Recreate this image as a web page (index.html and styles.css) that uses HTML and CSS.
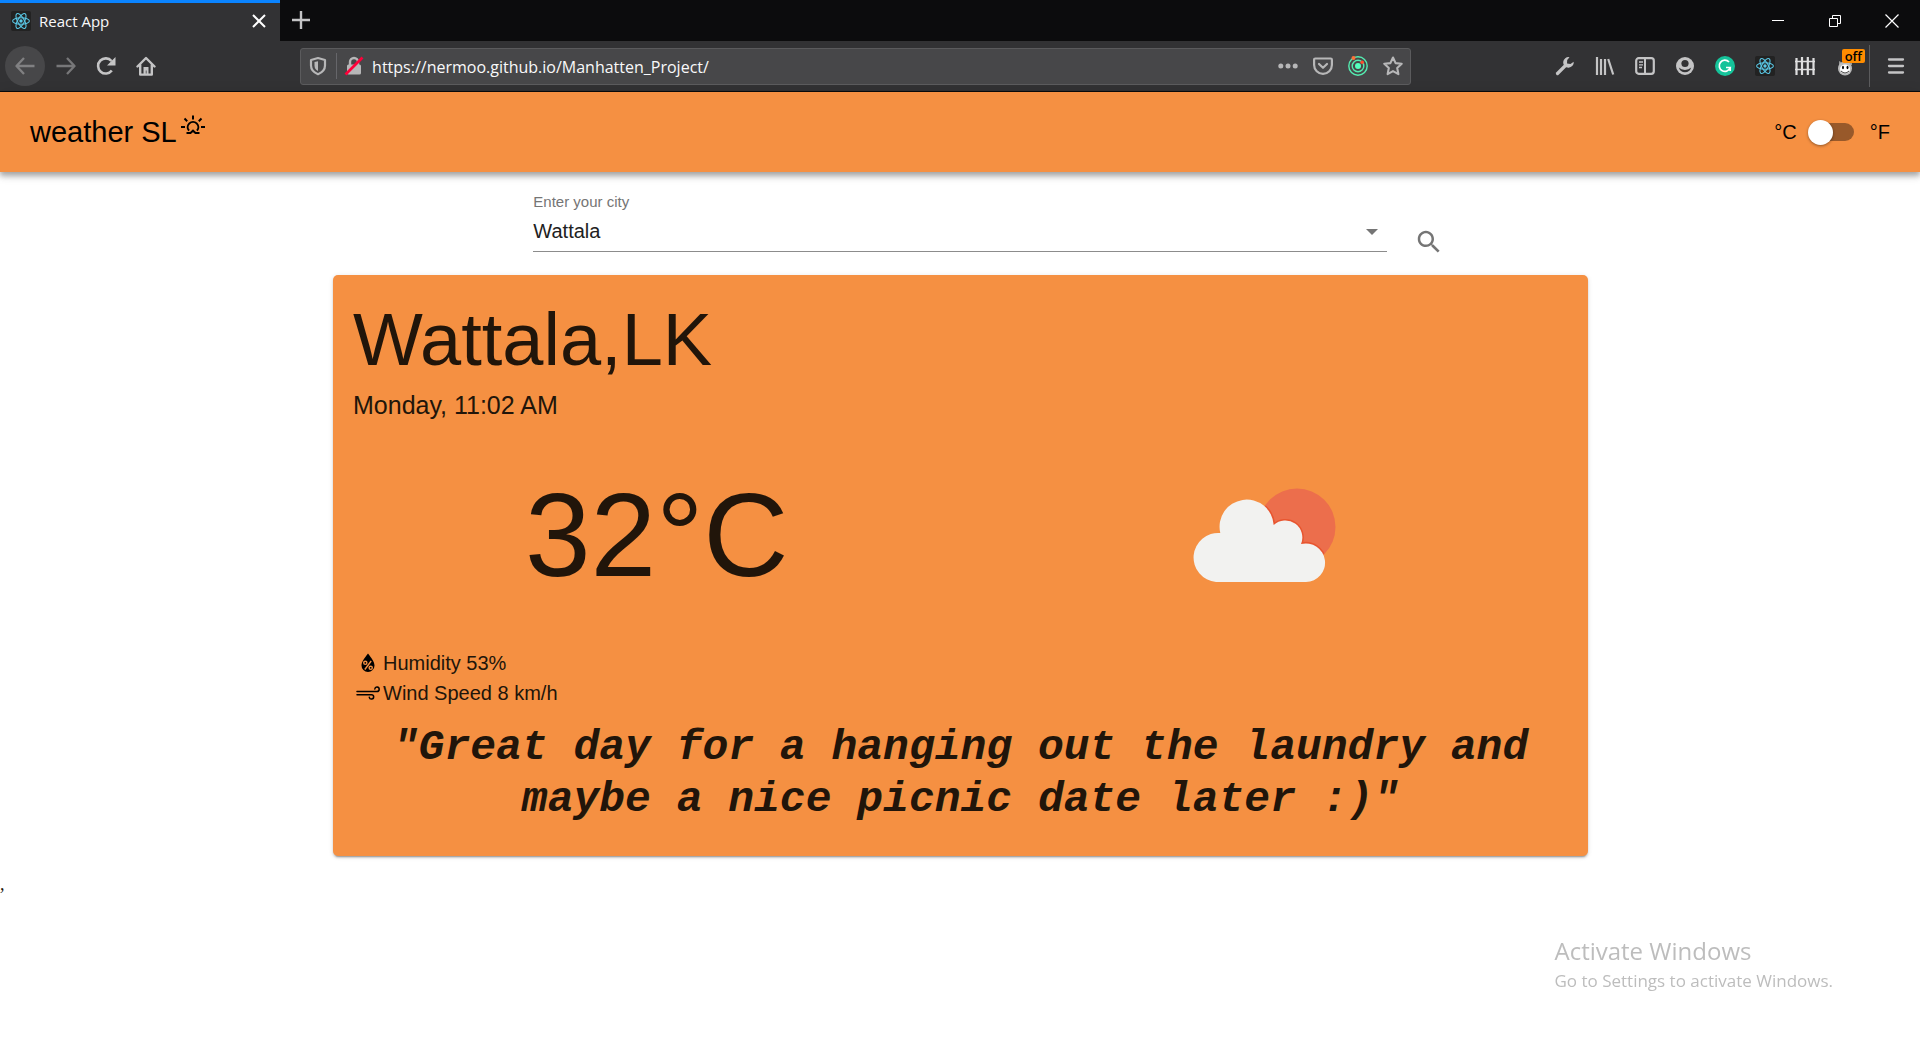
FILE: index.html
```
<!DOCTYPE html>
<html lang="en">
<head>
<meta charset="utf-8">
<title>React App</title>
<link rel="stylesheet" href="styles.css">
</head>
<body>
<svg class="sprite" aria-hidden="true">
  <symbol id="react-logo" viewBox="0 0 20 20">
    <rect width="20" height="20" rx="2" fill="#222"/>
    <g fill="none" stroke="#5ac8e6" stroke-width="1.1">
      <ellipse cx="10" cy="10" rx="8.4" ry="3.3"/>
      <ellipse cx="10" cy="10" rx="8.4" ry="3.3" transform="rotate(60 10 10)"/>
      <ellipse cx="10" cy="10" rx="8.4" ry="3.3" transform="rotate(120 10 10)"/>
    </g>
    <circle cx="10" cy="10" r="1.7" fill="#5ac8e6"/>
  </symbol>
</svg>

<div class="browser">
  <div class="tab-strip">
    <div class="tab">
      <svg class="icon"><use href="#react-logo"/></svg>
      <span class="tab-title">React App</span>
      <button class="tab-close" aria-label="Close tab"><svg class="icon" viewBox="0 0 20 20"><path d="M4 4l12 12M16 4L4 16" stroke="#fff" stroke-width="2" fill="none"/></svg></button>
    </div>
    <button class="tool" aria-label="New tab"><svg class="icon" viewBox="0 0 20 20"><path d="M11 1v18M2 10h18" stroke="#c4c4c5" stroke-width="2.4" fill="none"/></svg></button>
    <div class="window-controls">
      <button class="window-button" aria-label="Minimize"><svg class="icon" viewBox="0 0 20 20"><path d="M4 9.5h12" stroke="#fff"/></svg></button>
      <button class="window-button" aria-label="Restore"><svg class="icon" viewBox="0 0 20 20"><path d="M4.500 7.500h8v8h-8zM7.500 7V4.500h8v8H13" stroke="#fff" fill="none"/></svg></button>
      <button class="window-button" aria-label="Close"><svg class="icon" viewBox="0 0 20 20"><path d="M3.500 3.500l13 13M16.500 3.500l-13 13" stroke="#fff" stroke-width="1.200"/></svg></button>
    </div>
  </div>

  <div class="nav-bar">
    <button class="tool tool-back" aria-label="Back" disabled><svg class="icon" viewBox="0 0 20 20"><path d="M19.500 10H1.500M9 2L1.500 10L9 18" fill="none" stroke="#808082" stroke-width="2.300" stroke-linejoin="round"/></svg></button>
    <button class="tool" aria-label="Forward" disabled><svg class="icon" viewBox="0 0 20 20"><path d="M.5 10h18M11 2l7.500 8L11 18" fill="none" stroke="#777779" stroke-width="2.300" stroke-linejoin="round"/></svg></button>
    <button class="tool" aria-label="Reload"><svg class="icon" viewBox="0 0 20 20"><path d="M15.800 14.500A7.600 7.600 0 1 1 15.500 5" fill="none" stroke="#c4c4c5" stroke-width="2.600"/><path d="M19.500 1v8.500H11z" fill="#c4c4c5"/></svg></button>
    <button class="tool" aria-label="Home"><svg class="icon" viewBox="0 0 20 20"><path d="M1.500 10.500L10 2l8.500 8.500M4.200 9v9.600h11.600V9" fill="none" stroke="#c4c4c5" stroke-width="2.400" stroke-linejoin="round" stroke-linecap="round"/><path d="M7.500 18v-7h5v7h-2v-3.500H9.800V18z" fill="#c4c4c5"/></svg></button>
    <div class="nav-space"></div>
    <div class="url-bar">
      <svg class="icon" viewBox="0 0 20 20"><path d="M10 2L17 4v5.500c0 4-2.800 7-7 8.700c-4.200-1.700-7-4.700-7-8.700V4z" fill="none" stroke="#b7b7b8" stroke-width="2.200" stroke-linejoin="round"/><path d="M10 5.200v9.800c-2.400-1.300-3.500-3-3.500-5.500V6z" fill="#b7b7b8"/></svg>
      <span class="url-divider"></span>
      <svg class="icon" viewBox="0 0 20 20"><rect x="3" y="8.500" width="14" height="10" rx="1.500" fill="#b7b7b8"/><path d="M6 9V6a4 4 0 0 1 8 0v3" fill="none" stroke="#b7b7b8" stroke-width="2.400"/><path d="M1.500 18.500L18.500 1.500" stroke="#ff0039" stroke-width="2.600"/></svg>
      <input class="url-input" type="text" aria-label="Address" value="https://nermoo.github.io/Manhatten_Project/">
      <div class="url-actions">
        <svg class="icon" viewBox="0 0 20 20" fill="#b7b7b8"><circle cx="2.800" cy="10" r="2.500"/><circle cx="10" cy="10" r="2.500"/><circle cx="17.200" cy="10" r="2.500"/></svg>
        <svg class="icon" viewBox="0 0 20 20" fill="none" stroke="#b7b7b8" stroke-width="2.200" stroke-linejoin="round" stroke-linecap="round"><path d="M2.300 2.500h15.400q1.200 0 1.200 1.200v5.300a8.900 8.900 0 0 1-17.800 0V3.700q0-1.200 1.200-1.200z"/><path d="M6 8l4 3.800L14 8"/></svg>
        <svg class="icon" viewBox="0 0 20 20"><g fill="none" stroke="#54ecb0" stroke-width="1.400"><circle cx="10" cy="10" r="9.200"/><circle cx="10" cy="10" r="5.800"/></g><circle cx="10" cy="10" r="3" fill="#54ffbd"/><circle cx="5.500" cy="2" r="2" fill="#ff7139"/><circle cx="14.200" cy="6.200" r="1.800" fill="#ff4f2e"/></svg>
        <svg class="icon" viewBox="0 0 20 20"><path d="M10 1.500l2.600 5.600 6.100.7-4.500 4.200 1.200 6.100L10 15.100l-5.400 3 1.200-6.100L1.300 7.800l6.100-.7z" fill="none" stroke="#b7b7b8" stroke-width="2.100" stroke-linejoin="round"/></svg>
      </div>
    </div>
    <div class="nav-space"></div>
    <button class="tool" aria-label="Developer tools"><svg class="icon" viewBox="0 0 20 20"><path d="M2.500 17.500L11 9" stroke="#c4c4c5" stroke-width="3.200" stroke-linecap="round"/><path d="M14.500 1.200a5.300 5.300 0 1 0 4.200 4.500L15.500 8 12 7.500 12.200 4z" fill="#c4c4c5"/></svg></button>
    <button class="tool" aria-label="Library"><svg class="icon" viewBox="0 0 20 20"><path d="M2 1v18M6 3v16M10 3v16M13.200 3l5 15.500" stroke="#c4c4c5" stroke-width="2.200"/></svg></button>
    <button class="tool" aria-label="Sidebars"><svg class="icon" viewBox="0 0 20 20"><rect x="1.200" y="2.200" width="17.600" height="15.600" rx="2.500" fill="none" stroke="#c4c4c5" stroke-width="2.200"/><path d="M10 2v16" stroke="#c4c4c5" stroke-width="2"/><path d="M4 6h4M4 8.800h4M4 11.500h3" stroke="#c4c4c5" stroke-width="1.300"/></svg></button>
    <button class="tool" aria-label="Account"><svg class="icon" viewBox="0 0 20 20"><circle cx="10" cy="10" r="9" fill="#c4c4c5"/><circle cx="10" cy="7.500" r="3.600" fill="#323234"/><path d="M3.800 11.500q2.200 2.400 6.200 2.400t6.200-2.400q-1.500 4.700-6.200 4.700t-6.200-4.700z" fill="#323234"/></svg></button>
    <button class="tool" aria-label="Grammarly"><svg class="icon" viewBox="0 0 20 20"><circle cx="10" cy="10" r="10" fill="#15c39a"/><path d="M14 6a5.600 5.600 0 1 0 1.200 5.500H11M15.200 11v4" fill="none" stroke="#fff" stroke-width="1.700"/></svg></button>
    <button class="tool" aria-label="React Developer Tools"><svg class="icon"><use href="#react-logo"/></svg></button>
    <button class="tool" aria-label="Fence"><svg class="icon" viewBox="0 0 20 20"><path d="M1.500 2v17M7 1v18M12.800 1v18M18.500 2v17" stroke="#dededf" stroke-width="2.200"/><path d="M0 5.500h20M0 13.500h20" stroke="#dededf" stroke-width="1.400"/></svg></button>
    <button class="tool tool-badged" aria-label="Monkey extension"><svg class="icon" viewBox="0 0 20 20"><path d="M4 9V5l4 2h5l4-2v4z" fill="#999"/><circle cx="10" cy="12.500" r="7" fill="#bababa"/><ellipse cx="10" cy="13" rx="5" ry="4.500" fill="#fff"/><ellipse cx="8" cy="11.500" rx="1" ry="1.700"/><ellipse cx="12.500" cy="11.500" rx="1" ry="1.700"/><path d="M6 15q4 4 8 0" fill="none" stroke="#444"/></svg><span class="badge">off</span></button>
    <span class="nav-divider"></span>
    <button class="tool tool-menu" aria-label="Open menu"><svg class="icon" viewBox="0 0 20 20"><path d="M3 3.500h14M3 10h14M3 16.500h14" stroke="#c4c4c5" stroke-width="2.300" stroke-linecap="round"/></svg></button>
  </div>
</div>

<header class="app-bar">
  <h1 class="brand">weather SL<svg class="brand-icon" viewBox="0 0 30 30" fill="none" stroke="#000" stroke-width="2"><path d="M16 5.500v4M7.500 8.500l2.700 2.700M24.500 8.500l-2.700 2.700M4 17h4M24 17h4M9.500 23h4l2.500-2.300 2.500 2.300h4M12 20.700a5.300 5.300 0 1 1 8 0"/></svg></h1>
  <div class="units">
    <label for="unit">°C</label>
    <input class="unit-switch" id="unit" type="checkbox" role="switch" aria-label="Show Fahrenheit">
    <label for="unit">°F</label>
  </div>
</header>

<main class="content">
  <form class="search">
    <div class="field">
      <label class="field-label" for="city">Enter your city</label>
      <div class="select-wrap">
        <select class="city-select" id="city"><option>Wattala</option></select>
        <svg class="select-arrow" viewBox="0 0 30 30"><path d="M9 12l6 6 6-6z" fill="#757575"/></svg>
      </div>
    </div>
    <button class="search-button" type="button" aria-label="Search"><svg class="search-icon" viewBox="0 0 24 24"><path fill="#757575" d="M15.500 14h-.79l-.28-.27C15.410 12.590 16 11.110 16 9.500 16 5.910 13.090 3 9.500 3S3 5.910 3 9.500 5.910 16 9.500 16c1.610 0 3.090-.59 4.230-1.570l.27.280v.790l5 4.990L20.490 19l-4.990-5zm-6 0C7.010 14 5 11.990 5 9.500S7.010 5 9.500 5 14 7.010 14 9.500 11.990 14 9.500 14z"/></svg></button>
  </form>

  <section class="card">
    <h2 class="place">Wattala,LK</h2>
    <p class="time">Monday, 11:02 AM</p>
    <div class="current">
      <div class="temperature">32°C</div>
      <svg class="condition" viewBox="0 0 144 94" role="img" aria-label="Partly cloudy">
        <clipPath id="sun-clip"><circle cx="105" cy="39" r="38"/></clipPath>
        <circle cx="105" cy="39" r="38.500" fill="#ec6e4c"/>
        <g clip-path="url(#sun-clip)"><use href="#cloud" stroke="#e8552f" stroke-width="3"/></g>
        <path id="cloud" d="M24 94A24.500 24.500 0 1 1 28.300 45A27.100 27.100 0 1 1 81.700 37A17 17 0 0 1 109 56A19.300 19.300 0 1 1 114 94z" fill="#f2f2f0"/>
      </svg>
    </div>
    <ul class="details">
      <li class="detail"><svg class="detail-icon" viewBox="0 0 30 30"><path d="M15 5.500c3.800 5 6.500 8.500 6.500 12a6.500 6.500 0 0 1-13 0c0-3.500 2.700-7 6.500-12z"/><g fill="none" stroke="#f59042" stroke-width="1.400"><circle cx="12.300" cy="14.800" r="1.600"/><circle cx="17.700" cy="19.800" r="1.600"/><path d="M18.200 13l-6.400 8.500"/></g></svg>Humidity 53%</li>
      <li class="detail"><svg class="detail-icon" viewBox="0 0 30 30" fill="none" stroke="#000" stroke-width="1.500" stroke-linecap="round"><path d="M4 13.500h20a2.200 2.200 0 1 0-2.200-2.500M4 16.700h14.500a2.200 2.200 0 1 1-2.200 2.600"/></svg>Wind Speed 8 km/h</li>
    </ul>
    <p class="quote">"Great day for a hanging out the laundry and maybe a nice picnic date later :)"</p>
  </section>
</main>
<p class="stray">,</p>

<aside class="watermark">
  <p class="watermark-title">Activate Windows</p>
  <p class="watermark-text">Go to Settings to activate Windows.</p>
</aside>
</body>
</html>
```
FILE: styles.css
```
* { box-sizing: border-box; }

body {
  margin: 0;
  min-height: 100vh;
  background: #fff;
  color: #21150a;
  font-family: "Liberation Sans", Arial, sans-serif;
  font-size: 20px;
}

h1, h2, p, ul { margin: 0; padding: 0; font-weight: 400; }
button { border: 0; padding: 0; background: none; font: inherit; }
svg { display: block; flex: none; }

.sprite { position: absolute; width: 0; height: 0; }
.icon { width: 20px; height: 20px; }

/* Browser frame */
.browser {
  border-bottom: 1px solid #0c0c0d;
  background: #323234;
  font-family: "Open Sans", "Segoe UI", sans-serif;
}
.tab-strip { display: flex; height: 41px; background: #0c0c0d; }
.tab {
  display: flex;
  align-items: center;
  gap: 8px;
  width: 280px;
  padding: 0 11px 2px;
  border-top: 3px solid #0a84ff;
  background: #323234;
  color: #f9f9fa;
}
.tab-title { flex: 1; font-size: 15px; }
.window-controls { display: flex; margin-left: auto; }
.window-button { display: grid; place-items: center; width: 57px; }

.nav-bar { display: flex; align-items: center; height: 50px; padding: 0 4px 0 5px; }
.tool { position: relative; display: grid; flex: none; place-items: center; width: 40px; height: 40px; }
.tool-back { margin-right: 1px; border-radius: 50%; background: #474749; }
.nav-space { flex: 6; }
.url-bar {
  display: flex;
  flex: 49;
  align-items: center;
  height: 37px;
  padding: 0 7px;
  border: 1px solid #5b5b5d;
  border-radius: 3px;
  background: #474749;
}
.url-divider { width: 1px; height: 26px; margin: 0 7px 0 8px; background: #66666a; }
.url-input {
  flex: 1;
  min-width: 0;
  padding: 2px 8px 0;
  border: 0;
  background: none;
  color: #f9f9fa;
  font: 16px "Open Sans", "Segoe UI", sans-serif;
}
.url-actions { display: flex; gap: 15px; }
.badge {
  position: absolute;
  top: 3px;
  right: 0;
  padding: 0 3px;
  border-radius: 2px;
  background: #ff8c00;
  color: #000;
  font-size: 13px;
  font-weight: 600;
  line-height: 14px;
}
.nav-divider { width: 1px; height: 42px; margin: 0 6px 0 4px; background: #5b5b5d; }

/* App header */
.app-bar {
  display: flex;
  align-items: center;
  justify-content: space-between;
  height: 80px;
  padding: 0 30px;
  background: #f59042;
  box-shadow: 0 3px 5px rgba(0, 0, 0, .2), 0 5px 6px rgba(0, 0, 0, .14), 0 1px 13px rgba(0, 0, 0, .12);
  color: #000;
}
.brand { display: flex; font-size: 29px; line-height: 44px; }
.brand-icon { width: 30px; height: 30px; }
.units { display: flex; align-items: center; }
.unit-switch {
  position: relative;
  width: 42px;
  height: 18px;
  margin: 0 16px 0 15px;
  border-radius: 9px;
  background: #98592a;
  appearance: none;
}
.unit-switch::before {
  content: "";
  position: absolute;
  top: -3px;
  left: -4px;
  width: 25px;
  height: 25px;
  border-radius: 50%;
  background: #fff;
  box-shadow: 0 1px 3px rgba(0, 0, 0, .4);
}
.unit-switch:checked::before { left: 21px; }

/* City search */
.content { width: 66.667%; margin: 0 auto; padding-top: 20px; }
.search { display: grid; grid-template-columns: 1fr 4fr 1fr; align-items: start; }
.field { grid-column: 2; }
.field-label { display: block; margin-bottom: 2px; color: #757575; font-size: 15px; line-height: 19px; }
.select-wrap { position: relative; }
.city-select {
  display: block;
  width: 100%;
  height: 39px;
  padding: 0 30px 2px 0;
  border: 0;
  border-bottom: 1px solid #8c8c8c;
  border-radius: 0;
  background: none;
  color: #212121;
  font: inherit;
  appearance: none;
}
.select-arrow { position: absolute; top: 4px; right: 0; width: 30px; height: 30px; pointer-events: none; }
.search-button { display: grid; place-items: center; width: 54px; height: 54px; margin: 23px 0 0 15px; }
.search-icon { width: 30px; height: 30px; }

/* Weather card */
.card {
  margin: 6px 12px 0 13px;
  padding: 20px 20px 30px;
  border-radius: 5px;
  background: #f59042;
  box-shadow: 0 3px 1px -2px rgba(0, 0, 0, .2), 0 2px 2px rgba(0, 0, 0, .14), 0 1px 5px rgba(0, 0, 0, .12);
}
.place { font-size: 74px; line-height: 90px; }
.time { font-size: 25px; line-height: 40px; }
.current { display: grid; grid-template-columns: 1fr 1fr; place-items: center; padding: 40px 0 43px; }
.temperature { font-size: 118px; line-height: 140px; }
.condition { width: 144px; height: 94px; }
.details { list-style: none; }
.detail { display: flex; line-height: 30px; }
.detail-icon { width: 30px; height: 30px; }
.quote {
  margin-top: 14px;
  font: italic 700 43px/52px "Liberation Mono", "Courier New", monospace;
  text-align: center;
}
.stray { margin-top: 18px; font: italic 18px/20px "Liberation Serif", serif; }

/* Operating system notice over the desktop */
.watermark {
  position: fixed;
  right: 87px;
  bottom: 44px;
  color: #bdbdbd;
  font-family: "Open Sans", "Segoe UI", sans-serif;
}
.watermark-title { margin-bottom: 2px; font-size: 24px; line-height: 32px; }
.watermark-text { font-size: 17px; line-height: 24px; }
```
